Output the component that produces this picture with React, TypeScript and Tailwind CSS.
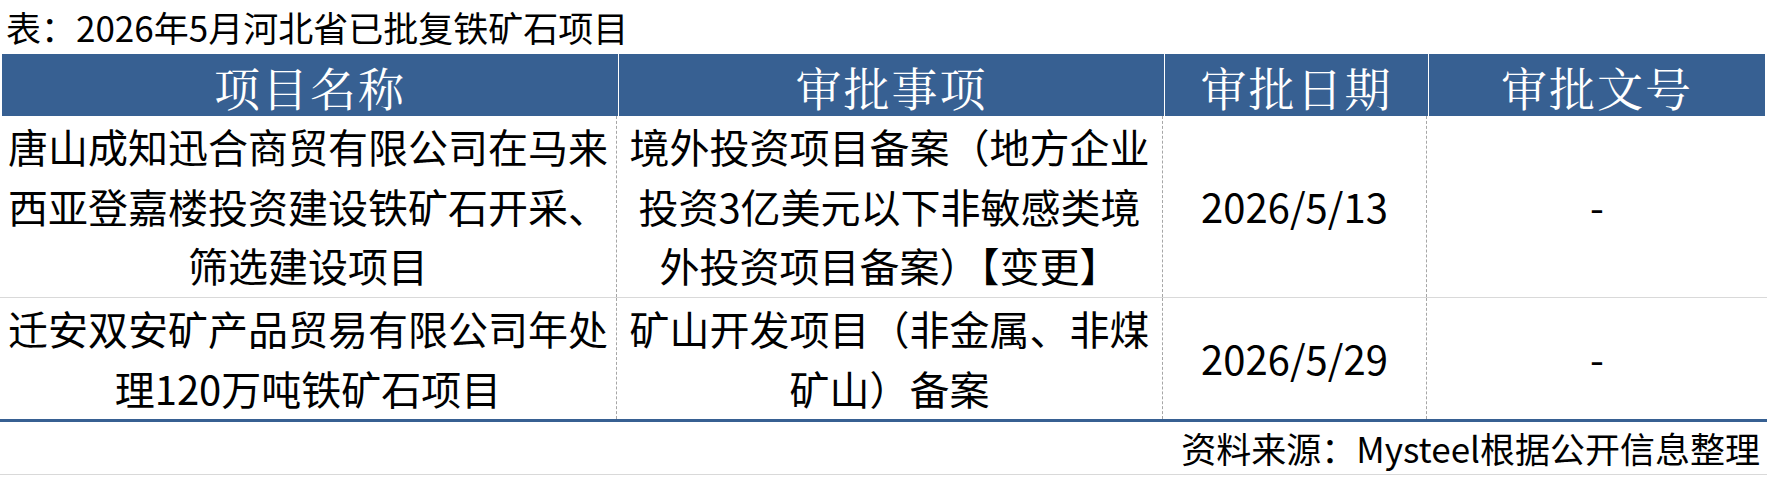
import React from "react";

const sans = { fontFamily: '"Noto Sans CJK SC", "Noto Sans", sans-serif' };

function Lines({ lines }: { lines: string[] }) {
  return (
    <div className="text-center">
      {lines.map((l, i) => (
        <div key={i} className="whitespace-nowrap">
          {l}
        </div>
      ))}
    </div>
  );
}

export default function App() {
  const headers = ["项目名称", "审批事项", "审批日期", "审批文号"];
  const rows = [
    {
      h: "h-[182px]",
      name: ["唐山成知迅合商贸有限公司在马来", "西亚登嘉楼投资建设铁矿石开采、", "筛选建设项目"],
      item: ["境外投资项目备案（地方企业", "投资3亿美元以下非敏感类境", "外投资项目备案）【变更】"],
      date: "2026/5/13",
      no: "-",
    },
    {
      h: "h-[121px]",
      name: ["迁安双安矿产品贸易有限公司年处", "理120万吨铁矿石项目"],
      item: ["矿山开发项目（非金属、非煤", "矿山）备案"],
      date: "2026/5/29",
      no: "-",
    },
  ];
  const cols = "grid grid-cols-[616px_546px_264px_1fr]";
  return (
    <div className="w-[1767px] h-[477px] bg-white text-black" style={sans}>
      <div className="h-[54px] pl-[6px] text-[35px] leading-[54px] whitespace-nowrap">
        表：2026年5月河北省已批复铁矿石项目
      </div>
      <div className={`${cols} h-[62px] bg-[#376092] ml-[2px] mr-[2px]`}>
        {headers.map((t, i) => (
          <div
            key={t}
            className={`flex items-center justify-center text-white text-[46px] leading-none pt-[2px] ${
              i > 0 ? "border-l border-white" : ""
            }`}
            style={{ fontFamily: '"Noto Serif CJK SC", "Noto Sans CJK SC", serif' }}
          >
            <span className="tracking-[2px]">{t}</span>
          </div>
        ))}
      </div>
      {rows.map((r, idx) => (
        <div
          key={idx}
          className={`${cols} ${r.h} text-[40px] leading-[59.5px] ${
            idx === 0 ? "border-b border-[#d9d9d9]" : ""
          }`}
        >
          <div className="flex items-center justify-center">
            <Lines lines={r.name} />
          </div>
          <div className="flex items-center justify-center border-l border-dashed border-[#a6a6a6]">
            <Lines lines={r.item} />
          </div>
          <div className="flex items-center justify-center border-l border-dashed border-[#a6a6a6]">
            {r.date}
          </div>
          <div className="flex items-center justify-center border-l border-dashed border-[#a6a6a6]">
            {r.no}
          </div>
        </div>
      ))}
      <div className="h-[3px] bg-[#376092]" />
      <div className="h-[53px] border-b border-[#d9d9d9] flex items-center justify-end pr-[7px] text-[35px] whitespace-nowrap">
        资料来源：Mysteel根据公开信息整理
      </div>
    </div>
  );
}
